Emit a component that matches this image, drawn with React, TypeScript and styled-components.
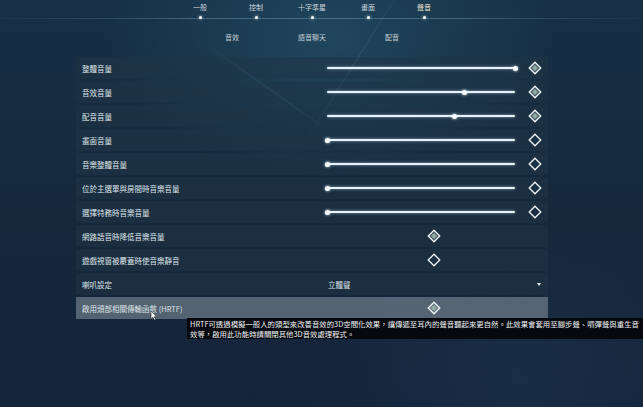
import React from 'react'
import styled, { createGlobalStyle } from 'styled-components'

const GlobalStyle = createGlobalStyle`
    html, body {
        margin: 0;
        padding: 0;
        background: #15263a;
    }
    body {
        font-family: "Noto Sans CJK TC", "Noto Sans", sans-serif;
    }
`

const Screen = styled.div`
    position: relative;
    width: 643px;
    height: 407px;
    overflow: hidden;
    background:
        radial-gradient(ellipse 320px 200px at 330px 40px, rgba(40, 90, 115, 0.55), transparent 70%),
        radial-gradient(ellipse 300px 220px at 520px 380px, rgba(30, 55, 80, 0.5), transparent 70%),
        linear-gradient(180deg, #173046 0%, #15283c 55%, #14243a 100%);
    color: #d6dde2;
`

const Streak = styled.div<{ left: number; top: number; angle: number; length: number }>`
    position: absolute;
    left: ${(p) => p.left}px;
    top: ${(p) => p.top}px;
    width: ${(p) => p.length}px;
    height: 1px;
    background: linear-gradient(90deg, transparent, rgba(140, 190, 210, 0.14), transparent);
    transform: rotate(${(p) => p.angle}deg);
    transform-origin: left center;
`

const Nav = styled.div`
    position: relative;
    height: 28px;
    padding-top: 2px;
    box-sizing: border-box;

    &::after {
        content: '';
        position: absolute;
        left: 0;
        right: 0;
        top: 18px;
        height: 1px;
        background: linear-gradient(90deg, rgba(120, 170, 190, 0.05), rgba(150, 200, 215, 0.3) 30%, rgba(150, 200, 215, 0.3) 70%, rgba(120, 170, 190, 0.05));
    }
`

const TabRow = styled.div`
    display: grid;
    grid-template-columns: repeat(5, 56px);
    margin-left: 172px;
`

const Tab = styled.div<{ active?: boolean }>`
    display: flex;
    flex-direction: column;
    align-items: center;
    font-size: 7px;
    line-height: 10px;
    color: ${(p) => (p.active ? '#efe8cf' : '#c9d4da')};

    &::after {
        content: '';
        width: 3px;
        height: 3px;
        margin-top: 4px;
        border-radius: 50%;
        background: #f4fbff;
        box-shadow: 0 0 3px rgba(220, 245, 255, 0.9);
        position: relative;
        z-index: 1;
    }
`

const SubTabRow = styled.div`
    display: grid;
    grid-template-columns: repeat(3, 80px);
    margin-left: 192px;
    height: 29px;
    align-items: center;
    padding-bottom: 12px;
    box-sizing: border-box;
`

const SubTab = styled.div`
    text-align: center;
    font-size: 7px;
    color: #c4ced5;
`

const Panel = styled.div`
    display: flex;
    flex-direction: column;
    gap: 2px;
    width: 472px;
    margin-left: 76px;
`

const Row = styled.div<{ highlight?: boolean }>`
    display: grid;
    grid-template-columns: 244px 228px;
    height: 22px;
    align-items: center;
    background: ${(p) => (p.highlight ? 'rgba(110, 124, 136, 0.72)' : 'rgba(32, 52, 70, 0.55)')};
`

const Label = styled.div`
    padding-left: 6px;
    font-size: 7.5px;
    color: #dde3e7;
    white-space: nowrap;
`

const SliderCell = styled.div`
    display: flex;
    align-items: center;
    padding-left: 7px;
    gap: 13px;
`

const Track = styled.div`
    position: relative;
    width: 188px;
    height: 2px;
    border-radius: 1px;
    background: #e9f3f7;
    box-shadow: 0 0 3px rgba(200, 235, 250, 0.7);
`

const Knob = styled.div`
    position: absolute;
    top: 50%;
    width: 5px;
    height: 5px;
    margin: -2.5px 0 0 -2.5px;
    border-radius: 50%;
    background: #ffffff;
    box-shadow: 0 0 3px rgba(230, 250, 255, 0.9);
`

const CenterCell = styled.div`
    display: flex;
    justify-content: center;
`

const SelectCell = styled.div`
    display: flex;
    align-items: center;
    justify-content: space-between;
    padding: 0 7px 0 8px;
    font-size: 7.5px;
    color: #d9e0e4;
`

const Caret = styled.span`
    width: 0;
    height: 0;
    border-left: 2.5px solid transparent;
    border-right: 2.5px solid transparent;
    border-top: 3px solid #e6ecef;
`

const Tooltip = styled.div`
    position: absolute;
    left: 187px;
    top: 318px;
    width: 456px;
    padding: 1px 0 1px 3px;
    box-sizing: border-box;
    background: #05080c;
    font-size: 7.4px;
    line-height: 9.5px;
    color: #eef2f4;
    white-space: nowrap;
`

const Pointer = styled.svg`
    position: absolute;
    left: 150px;
    top: 310px;
`

const Diamond = ({ filled }: { filled?: boolean }) => (
    <svg width="14" height="14" viewBox="0 0 14 14">
        <path d="M7 1.2 L12.8 7 L7 12.8 L1.2 7 Z" fill={filled ? 'rgba(150,170,165,0.35)' : 'none'} stroke="#eef5f6" strokeWidth="1.3" />
        {filled && <path d="M7 4 L10 7 L7 10 L4 7 Z" fill="#93aba3" />}
    </svg>
)

type Setting =
    | { kind: 'slider'; label: string; value: number; custom: boolean }
    | { kind: 'toggle'; label: string; on: boolean }
    | { kind: 'select'; label: string; value: string }

const settings: Setting[] = [
    { kind: 'slider', label: '整體音量', value: 1, custom: true },
    { kind: 'slider', label: '音效音量', value: 0.73, custom: true },
    { kind: 'slider', label: '配音音量', value: 0.68, custom: true },
    { kind: 'slider', label: '畫面音量', value: 0, custom: false },
    { kind: 'slider', label: '音樂整體音量', value: 0, custom: false },
    { kind: 'slider', label: '位於主選單與房間時音樂音量', value: 0, custom: false },
    { kind: 'slider', label: '選擇特務時音樂音量', value: 0, custom: false },
    { kind: 'toggle', label: '網路語音時降低音樂音量', on: true },
    { kind: 'toggle', label: '遊戲視窗被覆蓋時使音樂靜音', on: false },
    { kind: 'select', label: '喇叭設定', value: '立體聲' },
    { kind: 'toggle', label: '啟用頭部相關傳輸函數 (HRTF)', on: true },
]

const tabs = ['一般', '控制', '十字準星', '畫面', '聲音']
const subTabs = ['音效', '語音聊天', '配音']

const App = () => {
    return (
        <Screen>
            <GlobalStyle />
            <Streak left={300} top={150} angle={-58} length={220} />
            <Streak left={200} top={40} angle={35} length={160} />
            <Nav>
                <TabRow>
                    {tabs.map((t) => (
                        <Tab key={t} active={t === '聲音'}>{t}</Tab>
                    ))}
                </TabRow>
            </Nav>
            <SubTabRow>
                {subTabs.map((t) => (
                    <SubTab key={t}>{t}</SubTab>
                ))}
            </SubTabRow>
            <Panel>
                {settings.map((s, i) => (
                    <Row key={s.label} highlight={i === settings.length - 1}>
                        <Label>{s.label}</Label>
                        {s.kind === 'slider' && (
                            <SliderCell>
                                <Track>
                                    <Knob style={{ left: `${s.value * 100}%` }} />
                                </Track>
                                <Diamond filled={s.custom} />
                            </SliderCell>
                        )}
                        {s.kind === 'toggle' && (
                            <CenterCell>
                                <Diamond filled={s.on} />
                            </CenterCell>
                        )}
                        {s.kind === 'select' && (
                            <SelectCell>
                                <span>{s.value}</span>
                                <Caret />
                            </SelectCell>
                        )}
                    </Row>
                ))}
            </Panel>
            <Tooltip>
                HRTF可透過模擬一般人的頭型來改善音效的3D空間化效果，讓傳遞至耳內的聲音聽起來更自然。此效果會套用至腳步聲、噴彈聲與重生音
                <br />
                效等，啟用此功能時請關閉其他3D音效處理程式。
            </Tooltip>
            <Pointer width="8" height="11" viewBox="0 0 8 11">
                <path d="M1 1 L1 9 L3 7.2 L4.6 10.2 L5.8 9.6 L4.3 6.7 L6.8 6.6 Z" fill="#f4f6f7" stroke="#222" strokeWidth="0.6" />
            </Pointer>
        </Screen>
    )
}

export default App
